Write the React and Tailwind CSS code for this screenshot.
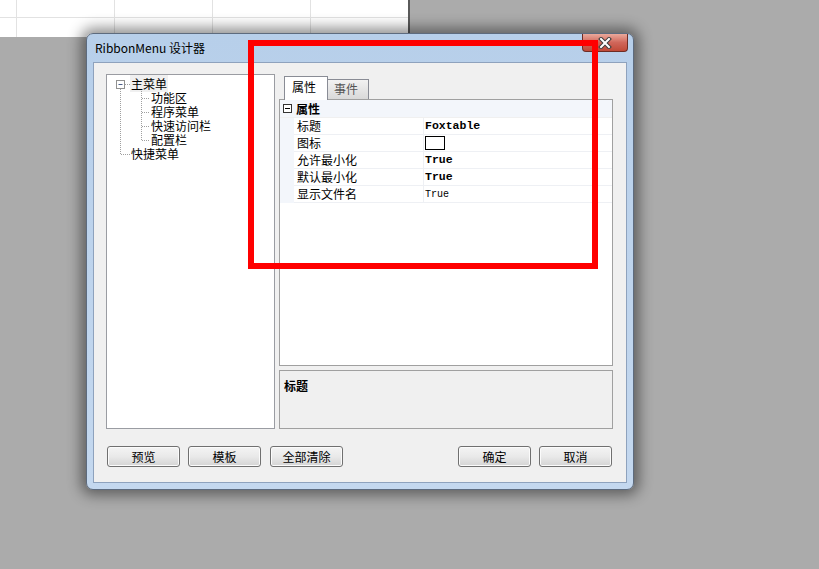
import React from 'react';

const cjk = { fontFamily: '"Noto Sans CJK SC", "Noto Sans", sans-serif' };
const mono = { fontFamily: '"Liberation Mono", "Noto Sans CJK SC", monospace' };

const props = [
  { name: '标题', value: 'Foxtable', bold: true },
  { name: '图标', icon: true },
  { name: '允许最小化', value: 'True', bold: true },
  { name: '默认最小化', value: 'True', bold: true },
  { name: '显示文件名', value: 'True' },
];

function Btn({ children, className = '' }) {
  return (
    <button
      className={`block w-[73px] h-[21px] rounded-[3px] border border-[#707070] bg-gradient-to-b from-[#f4f4f4] via-[#e9e9e9] to-[#d4d4d4] text-[12px] leading-[19px] text-black shadow-[inset_0_0_0_1px_#fbfbfb] ${className}`}
      style={cjk}
    >
      {children}
    </button>
  );
}

function Tree() {
  const children = ['功能区', '程序菜单', '快速访问栏', '配置栏'];
  return (
    <div className="relative w-[169px] h-[355px] bg-white border border-[#9a9ca2]" style={cjk}>
      {/* connector lines */}
      <svg className="absolute left-0 top-0" width="167" height="120">
        <g stroke="#a0a0a0" strokeWidth="1" strokeDasharray="1 1" fill="none">
          <line x1="13.5" y1="14" x2="13.5" y2="79" />
          <line x1="18" y1="9.5" x2="23" y2="9.5" />
          <line x1="34.5" y1="16" x2="34.5" y2="65" />
          <line x1="35" y1="23.5" x2="43" y2="23.5" />
          <line x1="35" y1="37.5" x2="43" y2="37.5" />
          <line x1="35" y1="51.5" x2="43" y2="51.5" />
          <line x1="35" y1="65.5" x2="43" y2="65.5" />
          <line x1="14" y1="79.5" x2="24" y2="79.5" />
        </g>
        <rect x="9.5" y="5.5" width="8" height="8" fill="#fff" stroke="#919191" />
        <line x1="11.5" y1="9.5" x2="15.5" y2="9.5" stroke="#4b5f8a" />
      </svg>
      <div className="pt-[2px] text-[12px] leading-[14px] text-black">
        <div className="h-[14px] leading-[14px] pl-[23px]">
          <span className="bg-[#f0f0f0] px-[1px]">主菜单</span>
        </div>
        {children.map((c) => (
          <div key={c} className="h-[14px] leading-[14px] pl-[44px]">{c}</div>
        ))}
        <div className="h-[14px] leading-[14px] pl-[24px]">快捷菜单</div>
      </div>
    </div>
  );
}

function PropertyPanel() {
  return (
    <div className="flex flex-col w-[334px]">
      <div className="h-[25px] flex items-end pl-[5px] relative z-10" style={cjk}>
        <div className="w-[44px] h-[24px] -mb-px bg-white border border-b-0 border-[#898c95] text-[12px] leading-[20px] pl-[7px] text-black">属性</div>
        <div className="w-[41px] h-[20px] border border-l-0 border-b-0 border-[#898c95] bg-gradient-to-b from-[#f2f2f2] to-[#d9d9d9] text-[12px] leading-[18px] pl-[6px] text-[#555]">事件</div>
      </div>
      <div className="h-[267px] border border-[#a0a0a0] bg-white" style={cjk}>
        <div className="h-[18px] flex items-center bg-[#f3f6fb] border-b border-[#f0f0f0]">
          <div className="w-[14px] flex justify-center">
            <svg width="9" height="9">
              <rect x="0.5" y="0.5" width="8" height="8" fill="#fff" stroke="#333" />
              <line x1="2" y1="4.5" x2="7" y2="4.5" stroke="#000" />
            </svg>
          </div>
          <span className="pl-[2px] text-[12px] font-bold text-black">属性</span>
        </div>
        {props.map((p) => (
          <div key={p.name} className="h-[17px] flex">
            <div className="w-[14px] bg-[#f3f6fb]" />
            <div className="w-[130px] pl-[3px] text-[12px] leading-[16px] text-black border-b border-r border-[#eef0f4]">{p.name}</div>
            <div className="flex-1 flex items-center pl-[1px] border-b border-[#eef0f4]">
              {p.icon ? (
                <div className="w-[20px] h-[14px] border border-black bg-white" />
              ) : p.bold ? (
                <span className="text-[11.5px] font-bold text-black" style={mono}>{p.value}</span>
              ) : (
                <span className="text-[10px] text-black" style={mono}>{p.value}</span>
              )}
            </div>
          </div>
        ))}
      </div>
      <div className="mt-[4px] h-[59px] border border-[#a0a0a0] bg-[#f0f0f0] pl-[4px] pt-[1px]" style={cjk}>
        <span className="text-[12px] font-bold text-black">标题</span>
      </div>
    </div>
  );
}

export default function App() {
  return (
    <div className="relative w-[819px] h-[569px] bg-[#ababab] overflow-hidden">
      {/* sheet behind the dialog */}
      <div className="w-[410px] h-[37px] bg-white border-r-2 border-[#5a5a5a] flex flex-col">
        <div className="flex h-[18px] border-b border-[#e2e2e2]">
          <div className="w-[17px] border-r border-[#e2e2e2]" />
          <div className="w-[98px] border-r border-[#e2e2e2]" />
          <div className="w-[98px] border-r border-[#e2e2e2]" />
          <div className="w-[98px] border-r border-[#e2e2e2]" />
          <div className="flex-1" />
        </div>
        <div className="flex flex-1">
          <div className="w-[17px] border-r border-[#e2e2e2]" />
          <div className="w-[98px] border-r border-[#e2e2e2]" />
          <div className="w-[98px] border-r border-[#e2e2e2]" />
          <div className="w-[98px] border-r border-[#e2e2e2]" />
          <div className="flex-1" />
        </div>
      </div>

      {/* dialog window */}
      <div className="absolute left-[86px] top-[33px] w-[548px] h-[457px] rounded-[7px] border border-[#5d6b7e] bg-gradient-to-b from-[#b7cfea] to-[#c4d8ef] shadow-[0_0_14px_5px_rgba(0,0,0,0.45)] flex flex-col">
        <div className="h-[28px] flex items-start justify-between">
          <span className="pl-[8px] pt-[5px] text-[12px] text-black" style={cjk}>RibbonMenu 设计器</span>
          <div className="mr-[5px] w-[46px] h-[18px] rounded-b-[4px] border border-t-0 border-[#6e2c24] bg-gradient-to-b from-[#e9a99c] via-[#d0665a] to-[#c04a38] flex items-center justify-center">
            <svg width="14" height="12" viewBox="0 0 14 12">
              <path d="M3 2 L11 10 M11 2 L3 10" stroke="#3c3c3c" strokeWidth="4" strokeLinecap="square" />
              <path d="M3 2 L11 10 M11 2 L3 10" stroke="#ffffff" strokeWidth="2" strokeLinecap="square" />
            </svg>
          </div>
        </div>
        <div className="mx-[6px] h-[421px] bg-[#f0f0f0] border border-[#8ea2bd] flex flex-col pt-[11px] pl-[12px]">
          <div className="flex gap-[4px]">
            <Tree />
            <PropertyPanel />
          </div>
          <div className="mt-[17px] flex items-start pl-[1px] pr-[14px]">
            <Btn>预览</Btn>
            <Btn className="ml-[8px]">模板</Btn>
            <Btn className="ml-[9px]">全部清除</Btn>
            <Btn className="ml-auto">确定</Btn>
            <Btn className="ml-[8px]">取消</Btn>
          </div>
        </div>
      </div>

      {/* red highlight frame */}
      <div className="absolute left-[248px] top-[40px] w-[350px] h-[229px] border-[6px] border-[#ff0000]" />
    </div>
  );
}
